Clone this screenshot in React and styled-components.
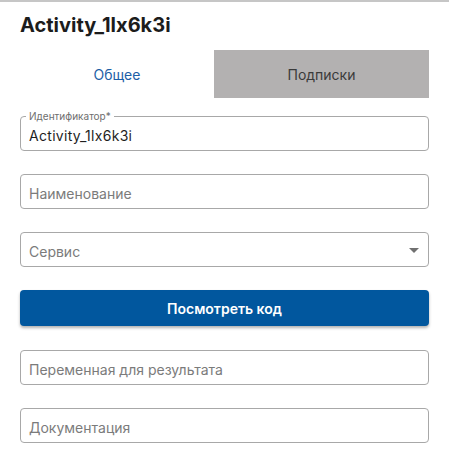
import React from "react";
import styled, { createGlobalStyle } from "styled-components";

const Global = createGlobalStyle`
  html, body { margin: 0; padding: 0; background: #fff; }
  body { font-family: Inter, "Noto Sans", sans-serif; -webkit-font-smoothing: antialiased; }
  * { box-sizing: border-box; }
`;

const Panel = styled.div`
  width: 449px;
  height: 471px;
  border-top: 2px solid #c6c6c6;
  padding: 11px 20px 0 20px;
  background: #fff;
`;

const Title = styled.h1`
  margin: 0;
  font-size: 20px;
  line-height: 24px;
  font-weight: 700;
  color: #1c1c1c;
`;

const Tabs = styled.div`
  display: flex;
  margin-top: 13px;
  height: 48px;
`;

const Tab = styled.div`
  flex: ${(p) => (p.$active ? "0 0 194px" : "1 1 auto")};
  display: flex;
  align-items: center;
  justify-content: center;
  font-size: 14px;
  color: ${(p) => (p.$active ? "#1d5ea6" : "#3a3a3a")};
  background: ${(p) => (p.$active ? "#fff" : "#b3b1b1")};
`;

const Form = styled.div`
  display: flex;
  flex-direction: column;
  gap: 23px;
  margin-top: 18px;
`;

const Field = styled.div`
  position: relative;
  height: 35px;
  border: 1px solid #a8a8a8;
  border-radius: 4px;
  display: flex;
  align-items: center;
  padding: 4px 8px 0 8px;
  font-size: 14px;
  letter-spacing: ${(p) => (p.$filled ? "0.3px" : "0")};
  color: ${(p) => (p.$filled ? "#1f1f1f" : "#7b7b7b")};
`;

const FloatLabel = styled.span`
  position: absolute;
  top: -7px;
  left: 5px;
  padding: 0 3px;
  background: #fff;
  font-size: 10px;
  line-height: 12px;
  letter-spacing: 0;
  color: #6e6e6e;
`;

const Arrow = styled.span`
  position: absolute;
  right: 9px;
  top: 15px;
  width: 0;
  height: 0;
  border-left: 5px solid transparent;
  border-right: 5px solid transparent;
  border-top: 5px solid #707070;
`;

const Button = styled.button`
  height: 36px;
  margin-bottom: 1px;
  border: none;
  border-radius: 4px;
  background: #01579e;
  color: #fff;
  font-family: Inter, "Noto Sans", sans-serif;
  font-size: 14px;
  font-weight: 600;
  box-shadow: 0 2px 3px rgba(0, 0, 0, 0.3);
  cursor: pointer;
`;

export default function App() {
  return (
    <>
      <Global />
      <Panel>
        <Title>Activity_1lx6k3i</Title>
        <Tabs>
          <Tab $active>Общее</Tab>
          <Tab>Подписки</Tab>
        </Tabs>
        <Form>
          <Field $filled>
            <FloatLabel>Идентификатор*</FloatLabel>
            Activity_1lx6k3i
          </Field>
          <Field>Наименование</Field>
          <Field>
            Сервис
            <Arrow />
          </Field>
          <Button>Посмотреть код</Button>
          <Field>Переменная для результата</Field>
          <Field>Документация</Field>
        </Form>
      </Panel>
    </>
  );
}
